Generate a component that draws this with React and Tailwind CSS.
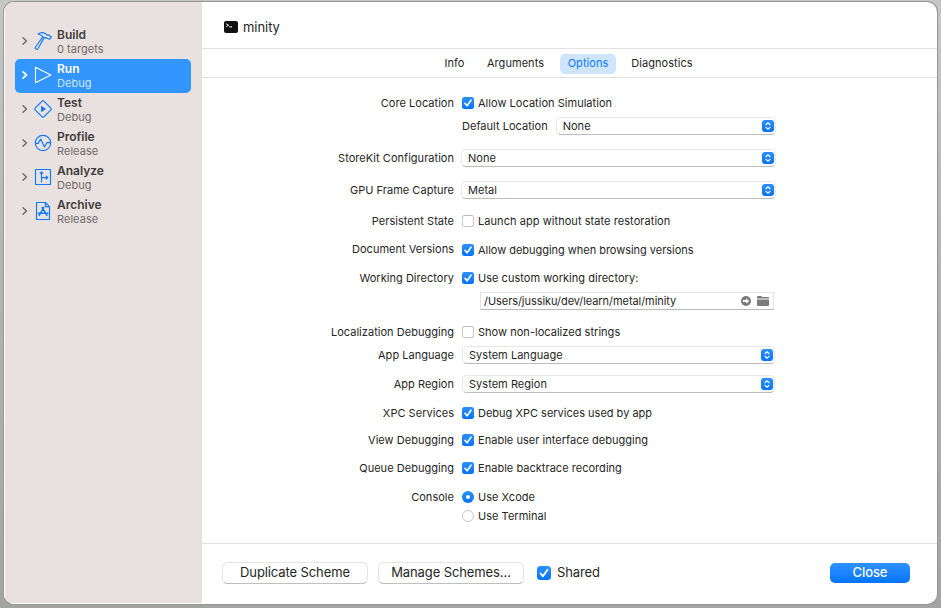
import React from "react";

const schemes = [
  { name: "Build", detail: "0 targets", icon: "hammer" },
  { name: "Run", detail: "Debug", icon: "run", selected: true },
  { name: "Test", detail: "Debug", icon: "test" },
  { name: "Profile", detail: "Release", icon: "profile" },
  { name: "Analyze", detail: "Debug", icon: "analyze" },
  { name: "Archive", detail: "Release", icon: "archive" },
];

function SchemeIcon({ kind }) {
  const common = {
    width: 20,
    height: 20,
    viewBox: "0 0 20 20",
    fill: "none",
    stroke: "currentColor",
    strokeWidth: 1.15,
    strokeLinejoin: "round",
    strokeLinecap: "round",
    className: "shrink-0",
  };
  if (kind === "hammer")
    return (
      <svg {...common}>
        <path d="M5 3.2C7 1.6 10 1.3 12.6 2.8L14.2 4.1L15.2 3.7L18.4 6L16.7 8.2L13.9 7.2L12.8 6.5L10.9 7.1L9.2 5.1C8 3.8 6.8 3.4 5 3.2Z" />
        <path d="M9.6 6.2L2.2 16.5C1.5 17.6 3.9 19.2 4.8 18L10.8 7.4" />
      </svg>
    );
  if (kind === "run")
    return (
      <svg {...common}>
        <path d="M2.5 2.2V17.8L17.8 10Z" />
      </svg>
    );
  if (kind === "test")
    return (
      <svg {...common}>
        <rect x="3.8" y="3.8" width="12.4" height="12.4" rx="1.2" transform="rotate(45 10 10)" />
        <path d="M8 6.8V13.2L13.2 10Z" fill="currentColor" stroke="none" />
      </svg>
    );
  if (kind === "profile")
    return (
      <svg {...common}>
        <circle cx="10" cy="10" r="7.7" />
        <path d="M2.5 10.4H5.2L7.7 6L11.4 14L14 9.6H17.5" />
      </svg>
    );
  if (kind === "analyze")
    return (
      <svg {...common}>
        <rect x="2.5" y="2.5" width="15" height="15" rx="0.6" />
        <path d="M8.5 15V5M7.2 6.3L8.5 4.8L9.8 6.3M8.5 10.6H14.6M13.2 9.2L14.8 10.6L13.2 12" />
      </svg>
    );
  return (
    <svg {...common}>
      <path d="M3.5 1.5H12.4L16.5 5.6V18.5H3.5ZM12.4 1.7V5.6H16.3" />
      <path d="M10.7 6.5L6.2 14.4M9.2 6.5L13.9 14.4M5.2 12.2H11M13 12.2H14.9" strokeWidth="1.5" />
    </svg>
  );
}

function Sidebar() {
  return (
    <aside className="w-[198px] shrink-0 border-b border-l border-white bg-[#e9e1df] pt-[23px] pl-[10px]">
      {schemes.map((s) => (
        <div
          key={s.name}
          className={
            "flex h-[34px] w-[176px] items-center rounded-[5px] pb-[2px] pl-[6px] " +
            (s.selected ? "bg-[#3395fe] text-white" : "text-[#403c3c]")
          }
        >
          <svg
            width="8"
            height="10"
            viewBox="0 0 8 10"
            fill="none"
            stroke={s.selected ? "#fff" : "#6c6665"}
            strokeWidth={s.selected ? 1.7 : 1.4}
            strokeLinecap="round"
            strokeLinejoin="round"
            className="shrink-0"
          >
            <path d="M2 1.8L5.5 5L2 8.2" />
          </svg>
          <span className={"ml-[4px] flex " + (s.selected ? "text-white" : "text-[#0a7aff]")}>
            <SchemeIcon kind={s.icon} />
          </span>
          <span className="ml-[4px] flex flex-col">
            <span className="text-[12px] leading-[15px] font-semibold">{s.name}</span>
            <span
              className={
                "text-[11px] leading-[14px] tracking-[0.04px] " +
                (s.selected ? "text-[#cfe5ff]" : "text-[#706a69]")
              }
            >
              {s.detail}
            </span>
          </span>
        </div>
      ))}
    </aside>
  );
}

function Check({ on, large, label, labelClass = "" }) {
  return (
    <span className={"flex items-center " + (large ? "gap-[6px]" : "gap-1")}>
      <span
        className={
          "flex shrink-0 items-center justify-center " +
          (large ? "size-[14px] rounded-[3.5px] " : "size-3 rounded-[2.5px] ") +
          (on
            ? "bg-linear-to-b from-[#2b90ff] to-[#0473fb]"
            : "border border-[#c9c9c9] border-t-[#bcbcbc] bg-white")
        }
      >
        {on && (
          <svg
            width={large ? 14 : 12}
            height={large ? 14 : 12}
            viewBox="0 0 12 12"
            fill="none"
            stroke="#fff"
            strokeWidth="1.6"
            strokeLinecap="round"
            strokeLinejoin="round"
          >
            <path d="M3 6.4L5.1 8.8L9 3.2" />
          </svg>
        )}
      </span>
      <span className={labelClass}>{label}</span>
    </span>
  );
}

function Radio({ on, label }) {
  return (
    <span className="flex items-center gap-1">
      <span
        className={
          "flex size-3 shrink-0 items-center justify-center rounded-full " +
          (on
            ? "bg-linear-to-b from-[#2b90ff] to-[#0473fb]"
            : "border border-[#c6c6c6] bg-white")
        }
      >
        {on && <span className="size-1 rounded-full bg-white" />}
      </span>
      <span>{label}</span>
    </span>
  );
}

function Select({ value, className }) {
  return (
    <span
      className={
        "flex h-[18px] items-center justify-between rounded-[4.5px] border border-[#e9e9e9] border-b-[#bdbdbd] bg-white pr-[1px] pl-[6px] " +
        className
      }
    >
      <span>{value}</span>
      <span className="flex size-3 items-center justify-center rounded-[3px] bg-linear-to-b from-[#2b90ff] to-[#0473fb]">
        <svg
          width="12"
          height="12"
          viewBox="0 0 12 12"
          fill="none"
          stroke="#fff"
          strokeWidth="1.2"
          strokeLinecap="round"
          strokeLinejoin="round"
        >
          <path d="M4 4.7L6 2.8L8 4.7M4 7.3L6 9.2L8 7.3" />
        </svg>
      </span>
    </span>
  );
}

function Row({ label, className = "", labelClass = "", children }) {
  return (
    <div className={"flex h-[18px] items-center gap-2 " + className}>
      <span className={"w-[252px] shrink-0 text-right " + labelClass}>{label}</span>
      {children}
    </div>
  );
}

function PathField() {
  return (
    <span className="ml-[18px] flex h-[18px] w-[294px] items-center border border-[#e4e4e4] border-b-[#b9b9b9] bg-white pr-1 pl-[3px]">
      <span className="grow tracking-[-0.06px]">/Users/jussiku/dev/learn/metal/minity</span>
      <svg width="10" height="10" viewBox="0 0 10 10">
        <circle cx="5" cy="5" r="5" fill="#7b7b7b" />
        <path d="M2 4H5V2.2L8.2 5L5 7.8V6H2Z" fill="#fff" />
      </svg>
      <svg width="12" height="10" viewBox="0 0 12 10" className="ml-[6px]">
        <path
          d="M0 2.6V1Q0 0 1 0H3.8Q4.5 0 4.9 .5L5.4 1H11Q12 1 12 2V2.6ZM0 3.5H12V9Q12 10 11 10H1Q0 10 0 9Z"
          fill="#7b7b7b"
        />
      </svg>
    </span>
  );
}

const tabs = ["Info", "Arguments", "Options", "Diagnostics"];

function Tabs() {
  return (
    <nav className="flex h-[29px] items-center border-b border-[#e2e2e2] pt-[2px] pl-[235px] text-[11px] tracking-[0.05px]">
      {tabs.map((t) => (
        <span
          key={t}
          className={
            "flex h-5 items-center justify-center rounded-[5px] pb-px " +
            (t === "Options"
              ? "mr-[7px] w-14 bg-[#cfe5ff] text-[#0a7aff]"
              : t === "Info"
                ? "mr-[7px] w-[35px]"
                : t === "Arguments"
                  ? "mr-[8px] w-[73px]"
                  : "w-[78px]")
          }
        >
          {t}
        </span>
      ))}
    </nav>
  );
}

function Footer() {
  const button =
    "flex h-[22px] items-center justify-center rounded-[5.5px] border border-[#e4e4e4] border-b-[#bebebe] bg-white";
  return (
    <footer className="flex h-[61px] items-center border-t border-[#e0e0e0] pr-[27px] pb-[2px] pl-5 text-[13px] tracking-[-0.1px]">
      <span className={button + " w-[146px]"}>Duplicate Scheme</span>
      <span className={button + " ml-[10px] w-[146px]"}>Manage Schemes...</span>
      <span className="ml-[13px]">
        <Check on large label="Shared" />
      </span>
      <span className="ml-auto flex h-5 w-20 items-center justify-center rounded-[5px] bg-linear-to-b from-[#2e91ff] to-[#0075ff] font-medium text-white">
        Close
      </span>
    </footer>
  );
}

export default function App() {
  return (
    <div className="flex h-[608px] w-[941px] bg-linear-to-b from-[#c6c6c6] via-[#b2b2b2] to-[#a4a4a4] px-1 pt-[2px] pb-1 font-['Inter','Liberation_Sans',sans-serif] whitespace-nowrap text-[#262626]">
      <div className="flex h-[602px] w-[933px] overflow-hidden rounded-[10px] bg-white shadow-[0_0_0_1px_#969696]">
        <Sidebar />
        <main className="flex grow flex-col">
          <header className="flex h-[47px] items-center border-b border-[#e2e2e2] pt-[4px] pl-[22px] text-[13px]">
            <svg width="14" height="12" viewBox="0 0 14 12">
              <rect width="14" height="12" rx="2" fill="#111" />
              <path d="M2.4 2.8L4.5 4.2L2.4 5.5M5.2 5.9H8" fill="none" stroke="#fff" strokeWidth="1" />
            </svg>
            <span className="ml-[5px] pt-px tracking-[-0.05px]">minity</span>
          </header>
          <Tabs />
          <section className="grow pt-4 text-[11px] tracking-[0.03px]">
            <Row label="Core Location">
              <Check on label="Allow Location Simulation" />
            </Row>
            <Row className="mt-[5px]">
              <span>Default Location</span>
              <Select value="None" className="w-[220px]" />
            </Row>
            <Row label="StoreKit Configuration" className="mt-[14px]">
              <Select value="None" className="-ml-px w-[315px]" />
            </Row>
            <Row label="GPU Frame Capture" className="mt-[14px]">
              <Select value="Metal" className="-ml-px w-[315px]" />
            </Row>
            <Row label="Persistent State" className="mt-[13px]">
              <Check label="Launch app without state restoration" labelClass="tracking-[0.06px]" />
            </Row>
            <Row label="Document Versions" className="mt-[11px]" labelClass="pb-[2px]">
              <Check
                on
                label="Allow debugging when browsing versions"
                labelClass="tracking-[-0.03px]"
              />
            </Row>
            <Row label="Working Directory" className="mt-[10px]">
              <Check on label="Use custom working directory:" />
            </Row>
            <Row className="mt-[5px]">
              <PathField />
            </Row>
            <Row label="Localization Debugging" className="mt-[13px]">
              <Check label="Show non-localized strings" />
            </Row>
            <Row label="App Language" className="mt-[5px]">
              <Select value="System Language" className="w-[313px]" />
            </Row>
            <Row label="App Region" className="mt-[11px]">
              <Select value="System Region" className="w-[313px]" />
            </Row>
            <Row label="XPC Services" className="mt-[11px]">
              <Check on label="Debug XPC services used by app" labelClass="tracking-[0px]" />
            </Row>
            <Row label="View Debugging" className="mt-[9px]">
              <Check on label="Enable user interface debugging" />
            </Row>
            <Row label="Queue Debugging" className="mt-[10px]">
              <Check on label="Enable backtrace recording" />
            </Row>
            <Row label="Console" className="mt-[11px]">
              <Radio on label="Use Xcode" />
            </Row>
            <Row className="mt-px">
              <Radio label="Use Terminal" />
            </Row>
          </section>
          <Footer />
        </main>
      </div>
    </div>
  );
}
